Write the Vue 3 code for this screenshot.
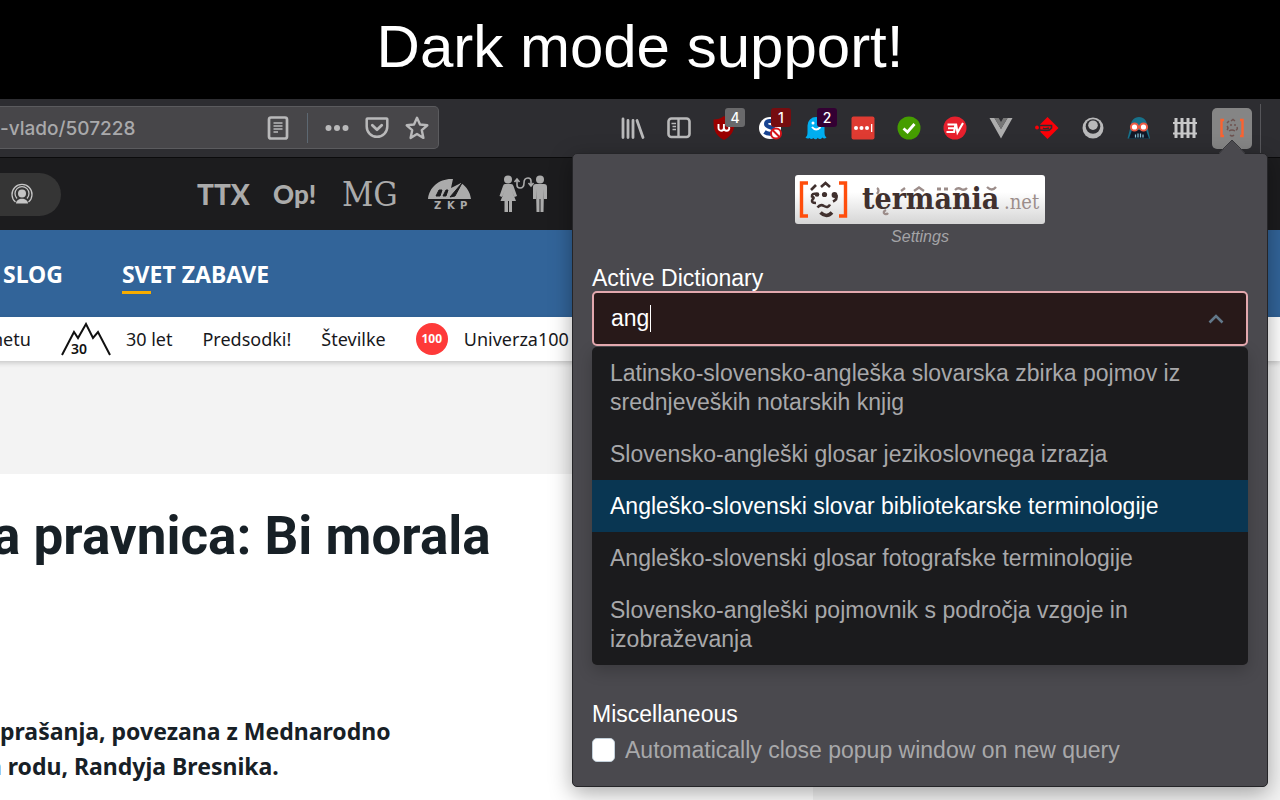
<script setup>
import { ref } from 'vue'

const address = ref('-vlado/507228')
const query = ref('ang')
const autoClose = ref(false)
const selected = 2
const options = [
  'Latinsko-slovensko-angleška slovarska zbirka pojmov iz srednjeveških notarskih knjig',
  'Slovensko-angleški glosar jezikoslovnega izrazja',
  'Angleško-slovenski slovar bibliotekarske terminologije',
  'Angleško-slovenski glosar fotografske terminologije',
  'Slovensko-angleški pojmovnik s področja vzgoje in izobraževanja',
]
</script>

<template>
  <div class="page">
    <header class="banner"><h1>Dark mode support!</h1></header>

    <div class="browser">
      <div class="toolbar">
        <div class="urlbar">
          <input v-model="address" class="address" type="text" aria-label="Address" />
          <button class="url-btn" aria-label="Reader view">
            <svg viewBox="0 0 24 24" fill="none" stroke="#b9b9ba"><rect x="3" y="1.500" width="18" height="21" rx="2" stroke-width="2.700" /><path d="M7.500 7h9M7.500 10h9M7.500 13h9M7.500 16h4.500" stroke-width="1.300" /></svg>
          </button>
          <span class="url-sep"></span>
          <button class="url-btn" aria-label="Page actions">
            <svg viewBox="0 0 24 24" fill="#b9b9ba"><circle cx="3.500" cy="12" r="3" /><circle cx="12" cy="12" r="3" /><circle cx="20.500" cy="12" r="3" /></svg>
          </button>
          <button class="url-btn" aria-label="Save to Pocket">
            <svg viewBox="0 0 24 24" fill="none" stroke="#b9b9ba" stroke-width="2.500" stroke-linecap="round" stroke-linejoin="round"><path d="M2.500 2.500h19a.8.800 0 0 1 .8.800v7.200a10.300 10.300 0 0 1-20.600 0V3.300a.8.800 0 0 1 .8-.8z" /><path d="M7.300 9.300l4.700 4.500 4.700-4.500" stroke-width="2.800" /></svg>
          </button>
          <button class="url-btn" aria-label="Bookmark">
            <svg viewBox="0 0 24 24" fill="none" stroke="#b9b9ba" stroke-width="2.400" stroke-linejoin="round"><path d="M12 1.800l3 6.700 7.300.8-5.500 4.900 1.600 7.700L12 18l-6.400 3.900 1.600-7.700-5.500-4.900 7.300-.8z" /></svg>
          </button>
        </div>

        <nav class="extensions" aria-label="Toolbar">
          <button class="ext" aria-label="Library">
            <svg viewBox="0 0 24 24" fill="none" stroke="#b9b9ba" stroke-width="2.800" stroke-linecap="round"><path d="M2 3v18.500M7 4.500v17M12 4.500v17M16 4.500l6 17" /></svg>
          </button>
          <button class="ext" aria-label="Sidebars">
            <svg viewBox="0 0 24 24" fill="none" stroke="#b9b9ba"><rect x="1.500" y="2.500" width="21" height="18.500" rx="3" stroke-width="2.600" /><path d="M11.500 3v18" stroke-width="2.400" /><path d="M4.500 7.500h4.500M5.500 10.500h3.500M5.500 13.500h3.500" stroke-width="1.300" /></svg>
          </button>
          <button class="ext" aria-label="uBlock Origin">
            <svg viewBox="0 0 24 24"><path d="M11 0c3 2.500 6.500 3.500 10.500 3.500 0 9-.5 15-10.500 20.500C1 18.500.500 12.500.500 3.500 4.500 3.500 8 2.500 11 0z" fill="#9a0000" /><path d="M5.500 8v4a2.700 2.700 0 0 0 5.400 0V8v4a2.700 2.700 0 0 0 5.400 0q0-2-2-3" fill="none" stroke="#fff" stroke-width="1.900" /></svg>
            <span class="badge grey">4</span>
          </button>
          <button class="ext" aria-label="Script blocker">
            <svg viewBox="0 0 24 24"><circle cx="11" cy="12" r="11" fill="#fff" /><path d="M16.500 6.500C13 4 7 4.500 7 8c0 4 8.500 2.500 8.500 6.500 0 4-6.500 4-10 1.500" fill="none" stroke="#174391" stroke-width="4" /><circle cx="17" cy="17.500" r="5" fill="#fff" stroke="#d7141a" stroke-width="2" /><path d="M13.500 14l7 7" stroke="#d7141a" stroke-width="2" /></svg>
            <span class="badge red">1</span>
          </button>
          <button class="ext" aria-label="Ghostery">
            <svg viewBox="0 0 24 24"><path d="M4.500 22c-1.500 1-3 .5-4-.5 1.500-1 2-3 2-5V9.500a8.500 8.500 0 0 1 17 0v7c0 2 .5 4 2 5-1.500 1.500-3 1.200-4.200 0-1.500 2-3.300 2-4.600.3-1.200 2-3 2-4.400.2-1.200 1.200-2.600 1.200-3.800 0z" fill="#00aef0" /><path d="M7 11q4 5 8.500 0" fill="none" stroke="#fff" stroke-width="2" /><circle cx="8" cy="7" r="1.500" fill="#fff" /></svg>
            <span class="badge purple">2</span>
          </button>
          <button class="ext" aria-label="LastPass">
            <svg viewBox="0 0 24 24"><rect x=".5" y=".5" width="23" height="23" rx="2" fill="#df3b32" /><g fill="#fff"><circle cx="5" cy="12" r="2" /><circle cx="10.500" cy="12" r="2" /><circle cx="16" cy="12" r="2" /><path d="M20 8h1.300v8H20z" /></g></svg>
          </button>
          <button class="ext" aria-label="Site check">
            <svg viewBox="0 0 24 24"><circle cx="12" cy="12" r="11.500" fill="#459d00" /><path d="M6.500 12.500l4 3.500 7-8" fill="none" stroke="#fff" stroke-width="2.800" /></svg>
          </button>
          <button class="ext" aria-label="ExpressVPN">
            <svg viewBox="0 0 24 24"><circle cx="12" cy="12" r="11.500" fill="#e7202d" /><path d="M4.500 8.500h8l-1.500 7.500H3.500M5 12.200h6.500M13 8l1.500 8.500L20 7" fill="none" stroke="#fff" stroke-width="2.100" /></svg>
          </button>
          <button class="ext" aria-label="Vue devtools">
            <svg viewBox="0 0 24 24"><path d="M.5 2h5L12 13l6.500-11h5L12 22.500z" fill="#adadad" /><path d="M5.500 2h4.200L12 6l2.300-4h4.200L12 13z" fill="#777" /></svg>
          </button>
          <button class="ext" aria-label="Request control">
            <svg viewBox="0 0 24 24"><path d="M5 8.500L12.500 1 23.500 12 12.500 23 5.500 16z" fill="#fb0007" /><circle cx="2" cy="11.500" r="1.900" fill="#fb0007" /><path d="M3.500 9.500h13v2.500q-2 3-6 2.500t-6.500-.5" fill="none" stroke="#2d2d31" stroke-width="1.600" /><path d="M8 12q2 1.500 6 0" fill="none" stroke="#2d2d31" stroke-width="1.400" /></svg>
          </button>
          <button class="ext" aria-label="Account">
            <svg viewBox="0 0 24 24"><circle cx="12" cy="12" r="10.500" fill="#b9b9ba" /><circle cx="12" cy="10.500" r="7.300" fill="#2d2d31" /><circle cx="12" cy="9.200" r="4.800" fill="#b9b9ba" /></svg>
          </button>
          <button class="ext" aria-label="Reader mask">
            <svg viewBox="0 0 24 24"><path d="M12 1c5 0 8 4 8 8l3 13.500H.5L4 9c0-4 3-8 8-8z" fill="#17718a" /><path d="M5 14l-3 8.500h20L19 14z" fill="#111827" /><g fill="#fff" stroke="#ed5a43" stroke-width="2"><circle cx="7.500" cy="11" r="3.600" /><circle cx="16.500" cy="11" r="3.600" /></g><path d="M8.500 18.500v3M11 17.500v4M13.500 17.500v4M16 18.500v3" stroke="#8bc9dc" stroke-width="1.200" /></svg>
          </button>
          <button class="ext" aria-label="Fence">
            <svg viewBox="0 0 24 24" fill="none" stroke="#c8c8c9" stroke-width="3"><path d="M3 2v20M9 2v20M15 2v20M21 2v20" /><path d="M0 7h24M0 17.500h24" stroke-width="1.800" /></svg>
          </button>
          <button class="ext active" aria-label="Termania">
            <svg viewBox="0 0 24 24" fill="none"><path d="M4 4H1.500v16H4M20 4h2.500v16H20" stroke="#fb6330" stroke-width="2.400" /><path d="M7 7l2-2M11 5l2-1.500L15 5M7 10q2 2 0 4M10 9h2M14 9h2M17 11q1 2-1 3M9 15q3-2 6 0M10 19q2 2 4 0" stroke="#6e5350" stroke-width="1.500" /></svg>
          </button>
          <span class="bar-sep"></span>
        </nav>
      </div>

      <main class="site">
        <div class="brands">
          <button class="podcast" aria-label="Podcasts">
            <svg viewBox="0 0 24 24" fill="none" stroke="#c5c5c5" stroke-width="1.300"><path d="M5.500 20a10 10 0 1 1 13 0M7 16.500a7 7 0 1 1 10 0" /><circle cx="12" cy="11.500" r="4" fill="#c5c5c5" stroke="none" /><path d="M6 21.500c0-6.500 12-6.500 12 0z" fill="#c5c5c5" stroke="none" /></svg>
          </button>
          <a href="#" class="brand ttx">TTX</a>
          <a href="#" class="brand op">Op!</a>
          <a href="#" class="brand mg">MG</a>
          <a href="#" class="brand" aria-label="ZKP">
            <svg width="43" height="32" viewBox="0 0 43 32"><path d="M0 21C1 9 12 0 25 1l-2 9 10-5c6 4 9 9 10 16z" fill="#ababab" /><path d="M8 18l3-6h3l-2 6zM15 18l3-6h2l-2 6zM22 19L34 5l-7 13z" fill="#1c1c1e" stroke="#1c1c1e" stroke-width="1" /><text x="6" y="31" class="zkp">Z</text><text x="19" y="31" class="zkp">K</text><text x="32" y="31" class="zkp">P</text></svg>
          </a>
          <a href="#" class="brand" aria-label="People">
            <svg width="49" height="38" viewBox="0 0 49 38" fill="#ababab"><circle cx="9" cy="4.500" r="4" /><path d="M6 9h6q2 0 2.500 2l3.500 10-2.500 1-2.500-6 4 10h-4v11h-3V26H9v11H5.500V26h-4l4-10L3 22l-2.500-1L4 11q.500-2 2-2z" /><circle cx="41" cy="4.500" r="4" /><path d="M37 9h8q3 0 3 3v12h-3V14l-.5 23h-3V24h-1v13h-3L37 14v10h-3V12q0-3 3-3z" /><path d="M18 5v5q0 3 3 3 4 0 4-5t4-5q3 0 3 3v4M15.500 7L18 4l2.500 3M29.500 8L32 11l2.500-3" fill="none" stroke="#ababab" stroke-width="1.600" /></svg>
          </a>
        </div>

        <nav class="sections" aria-label="Sections">
          <a href="#">SLOG</a>
          <a href="#" class="current">SVET ZABAVE</a>
        </nav>

        <nav class="topics" aria-label="Topics">
          <a href="#">netu</a>
          <svg class="peak" width="50" height="34" viewBox="0 0 50 34"><path d="M1 33L13 10l4 6L25 2l7 14 5-6 12 23" fill="none" stroke="#111" stroke-width="2" /><text x="10" y="32">30</text></svg>
          <a href="#" class="after-peak">30 let</a>
          <a href="#">Predsodki!</a>
          <a href="#">Številke</a>
          <span class="hundred">100</span>
          <a href="#" class="after-hundred">Univerza100</a>
        </nav>

        <article class="story">
          <h2>a pravnica: Bi morala</h2>
          <p>prašanja, povezana z Mednarodno</p>
          <p class="second">a rodu, Randyja Bresnika.</p>
        </article>
      </main>

      <section class="popup" aria-label="Termania settings">
        <svg class="pointer" width="26" height="15" viewBox="0 0 26 15"><path d="M0 15L13 1l13 14z" fill="#4a494e" /><path d="M0 14L13 1l13 13" fill="none" stroke="#38383c" stroke-width="1" /></svg>
        <svg class="logo" width="250" height="49" viewBox="0 0 250 49" role="img" aria-label="termania.net">
          <defs><linearGradient id="plate" x1="0" y1="0" x2="0" y2="1"><stop offset=".35" stop-color="#fff" /><stop offset="1" stop-color="#d5d5d5" /></linearGradient></defs>
          <rect width="250" height="49" rx="3" fill="url(#plate)" />
          <path d="M13 8H6.500v33H13M44 8h6.500v33H44" fill="none" stroke="#ff4e0c" stroke-width="3.400" />
          <g fill="none" stroke="#40302e" stroke-width="2.600">
            <path d="M16 15l5-5" /><path d="M26 12l4.500-4 4.500 4" />
            <path d="M21.500 19q-5-1-4.500 2.500 3 1 .5 3-2 3.500 3.500 3.500" />
            <path d="M41.500 20q1 4.500-3.500 6.500" /><path d="M22.500 32.500q3-4 6.500-1.500 4 2.500 6-1.500" /><path d="M25.500 37.500q6 6 11.500 0" stroke-width="3.600" />
          </g>
          <g fill="#40302e"><circle cx="22" cy="19.500" r="2.300" /><circle cx="29.500" cy="19.500" r="2.600" /><circle cx="39.500" cy="20" r="2.900" /></g>
          <text x="67" y="34" class="word">termania</text>
          <text x="209" y="34" class="net">.net</text>
          <g fill="none" stroke="#9c8d8a" stroke-width="2.300">
            <path d="M82 13q3 2 0 6" /><path d="M91 35q-4 2-1 4 2 .5 3-1" /><path d="M106 16l4-3" /><path d="M119 16l5-3.500 5 3.500" /><path d="M142 14h4M149 14h4" stroke-width="3" /><path d="M160 15q3-3 6-1t6-1" /><path d="M192 12q5 5 9 0" />
          </g>
        </svg>
        <p class="subtitle">Settings</p>

        <label class="heading" for="dictionary">Active Dictionary</label>
        <div class="combo">
          <input id="dictionary" v-model="query" type="text" role="combobox" aria-expanded="true" aria-controls="dictionaries" />
          <span class="caret"></span>
          <svg width="16" height="10" viewBox="0 0 16 10" fill="none" stroke="#62788a" stroke-width="2.600"><path d="M1.500 8.500L8 2l6.500 6.500" /></svg>
        </div>
        <ul id="dictionaries" class="options" role="listbox">
          <li v-for="(name, i) in options" :key="name" role="option" :aria-selected="i === selected" :class="{ chosen: i === selected }">{{ name }}</li>
        </ul>

        <h3 class="heading misc">Miscellaneous</h3>
        <label class="check"><input v-model="autoClose" type="checkbox" /><span>Automatically close popup window on new query</span></label>
      </section>
    </div>
  </div>
</template>

<style>
body { background: #f3f3f3; overflow-x: hidden; }
</style>

<style scoped>
.page { height: 100vh; overflow: hidden; display: flex; flex-direction: column; background: #f3f3f3; font-family: "Liberation Sans", Arial, sans-serif; }
.page * { box-sizing: border-box; }
button { border: 0; padding: 0; background: none; font: inherit; }
a { color: inherit; text-decoration: none; }
.banner { background: #000; color: #fff; height: 99px; flex: none; text-align: center; }
.banner h1 { margin: 0; font-size: 60px; line-height: 93px; font-weight: 400; }
.browser { position: relative; flex: 1; display: flex; flex-direction: column; }

.toolbar { display: flex; justify-content: space-between; align-items: flex-start; height: 59px; background: #2d2d31; border-bottom: 1px solid #0b0b0c; }
.urlbar { display: flex; align-items: center; width: 439px; height: 43px; margin-top: 7px; padding-right: 1px; background: #474649; border: 1px solid #5b5b5e; border-left: 0; border-radius: 0 5px 5px 0; }
.address { flex: 1; min-width: 0; border: 0; padding: 2px 0 0; background: none; color: #a9a9ab; font: 500 19px Inter, sans-serif; outline: 0; }
.url-btn { display: flex; justify-content: center; width: 40px; }
.url-btn svg { width: 24px; height: 24px; }
.url-sep { width: 1px; height: 30px; margin: 0 9px; background: #5d6872; }
.extensions { display: flex; height: 58px; align-items: center; padding-right: 19px; }
.ext { position: relative; width: 40px; height: 41px; margin: 0 3px; border-radius: 5px; display: flex; align-items: center; justify-content: center; }
.ext svg { width: 24px; height: 24px; }
.ext.active { margin-left: 4px; background: #858585; }
.badge { position: absolute; top: 0; right: 0; width: 20px; height: 19px; border-radius: 3px; color: #fff; font: 500 14px/19px Inter, sans-serif; text-align: center; }
.grey { background: #69696b; }
.red { background: #760d10; }
.purple { background: #330033; }
.bar-sep { width: 1px; height: 49px; margin-left: 5px; background: #56565a; }

.site { flex: 1; display: flex; flex-direction: column; }
.brands { display: flex; align-items: center; gap: 28px; height: 72px; flex: none; background: #1c1c1e; color: #ababab; }
.podcast { width: 61px; height: 43px; margin-right: 108px; padding-left: 10px; display: flex; align-items: center; border-radius: 0 22px 22px 0; background: #353535; }
.podcast svg { width: 24px; height: 24px; }
.brand { display: flex; }
.ttx { width: 48px; font: 900 28px/30px Lato, sans-serif; }
.op { width: 41px; font: 900 26px/30px Lato, sans-serif; }
.mg { width: 58px; font: 34px/30px "DejaVu Serif Condensed", "DejaVu Serif", serif; }
.zkp { font: 700 10px "DejaVu Sans", sans-serif; fill: #ababab; }

.sections { display: flex; align-items: center; gap: 59px; height: 87px; padding-left: 3px; background: #326499; color: #fff; font: 700 23px/40px "Noto Sans", sans-serif; }
.current { position: relative; }
.current::after { content: ""; position: absolute; left: 0; bottom: 0; width: 29px; height: 3px; background: #f7ac00; }
.topics { position: relative; display: flex; align-items: center; gap: 30px; height: 44px; margin-left: -8px; background: #fff; color: #17181c; font: 18px/28px "Noto Sans", sans-serif; box-shadow: 0 2px 5px rgba(0, 0, 0, .18); }
.peak text { font: 600 14px "Noto Sans", sans-serif; fill: #111; }
.after-peak { margin-left: -15px; }
.hundred { width: 32px; height: 32px; border-radius: 50%; background: #fe3a39; color: #fff; font: 700 12px/32px "Noto Sans", sans-serif; text-align: center; }
.after-hundred { margin-left: -14px; }
.story { width: 63.500%; flex: 1; margin-top: 113px; background: #fff; color: #172026; white-space: nowrap; }
.story h2 { margin: 0 0 146px -8px; padding-top: 30px; font: 700 53px/64px Roboto, sans-serif; }
.story p { margin: 0; font: 700 23px/35px "Noto Sans", sans-serif; }
.story .second { margin-left: -12px; }

.popup { position: absolute; top: 54px; right: 12px; width: 696px; max-width: 96%; padding: 21px 19px 22px; display: flex; flex-direction: column; background: #4a494e; border: 1px solid #252528; border-radius: 5px; box-shadow: 0 6px 22px rgba(0, 0, 0, .34); font-size: 23px; }
.pointer { position: absolute; top: -15px; right: 22px; }
.logo { align-self: center; }
.subtitle { margin: 3px 0 18px; text-align: center; color: #a4a4a7; font-size: 16px; font-style: italic; line-height: 20px; }
.word { font: 700 30px "DejaVu Serif Condensed", "DejaVu Serif", serif; fill: #40302e; }
.net { font: 20px "DejaVu Serif Condensed", "DejaVu Serif", serif; fill: #9c8d8a; }
.heading { margin: 0; color: #fff; font-size: 23px; line-height: 26px; font-weight: 400; }
.combo { position: relative; display: flex; align-items: center; height: 55px; padding: 0 22px 0 17px; background: #281919; border: 2px solid #e3a8ae; border-radius: 5px; }
.combo input { flex: 1; min-width: 0; padding: 0; border: 0; outline: 0; background: none; color: #fff; font: 23px "Liberation Sans", Arial, sans-serif; }
.caret { position: absolute; left: 56px; top: 12px; width: 1px; height: 27px; background: #fff; }
.options { list-style: none; margin: 1px 0 0; padding: 0; overflow: hidden; border-radius: 5px; background: #1b1b1d; color: #a8a8aa; line-height: 29px; box-shadow: 0 6px 16px rgba(0, 0, 0, .2); }
.options li { padding: 12px 60px 11px 18px; }
.options .chosen { background: #093652; color: #fff; }
.misc { margin-top: 36px; }
.check { display: flex; align-items: center; gap: 10px; margin-top: 9px; color: #a8a8aa; line-height: 28px; }
.check input { appearance: none; width: 23px; height: 24px; margin: 0; border: 1px solid #c3d0da; border-radius: 5px; background: #fff; }
</style>
